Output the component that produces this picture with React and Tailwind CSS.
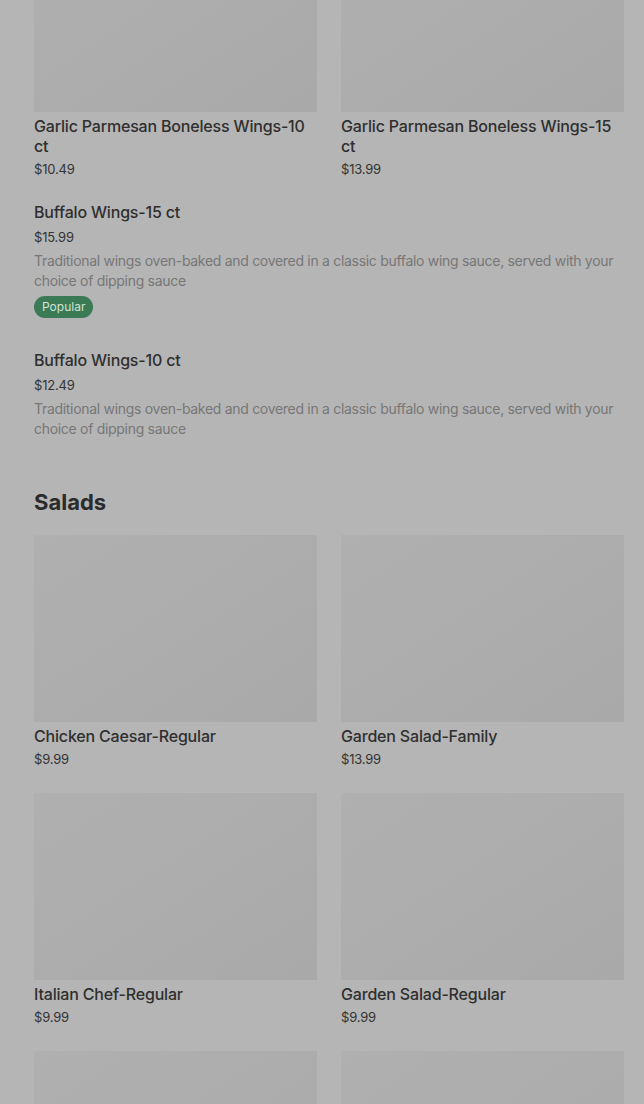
const wingCards = [
  { name: "Garlic Parmesan Boneless Wings-10 ct", price: "$10.49" },
  { name: "Garlic Parmesan Boneless Wings-15 ct", price: "$13.99" },
];

const salads = [
  { name: "Chicken Caesar-Regular", price: "$9.99" },
  { name: "Garden Salad-Family", price: "$13.99" },
  { name: "Italian Chef-Regular", price: "$9.99" },
  { name: "Garden Salad-Regular", price: "$9.99" },
  { name: "", price: "" },
  { name: "", price: "" },
];

const desc =
  "Traditional wings oven-baked and covered in a classic buffalo wing sauce, served with your choice of dipping sauce";

const Card = ({ item }) => (
  <div>
    <div className="h-[187px] bg-gradient-to-br from-[#b0b0b0] to-[#a9a9a9]" />
    {item.name && (
      <>
        <h3 className="mt-1 text-[16px] leading-5 font-medium tracking-[-0.18px] text-[#2f2f2f]">{item.name}</h3>
        <p className="mt-[3px] text-[13px] leading-5 tracking-[-0.2px] text-[#333]">{item.price}</p>
      </>
    )}
  </div>
);

const ListItem = ({ name, price, popular }) => (
  <div className="py-4">
    <h3 className="text-[16px] leading-5 font-medium tracking-[-0.18px] text-[#2f2f2f]">{name}</h3>
    <p className="mt-[5px] text-[13px] leading-5 tracking-[-0.2px] text-[#333]">{price}</p>
    <p className="mt-[4px] text-[14px] leading-5 text-[#777] tracking-[-0.3px]">{desc}</p>
    {popular && (
      <span className="mt-[5px] inline-block rounded-full bg-[#3a7a55] px-2 text-[12px] leading-[22px] text-[#cfe3d6]">
        Popular
      </span>
    )}
  </div>
);

export default function App() {
  return (
    <div
      className="min-h-[1104px] bg-[#b5b5b5] pl-[34px] pr-[20px] overflow-hidden"
      style={{ fontFamily: "Inter, 'Noto Sans', sans-serif" }}
    >
      <div className="-mt-[75px] grid grid-cols-2 gap-x-6">
        {wingCards.map((c) => (
          <Card key={c.name} item={c} />
        ))}
      </div>

      <div className="mt-[7px]">
        <ListItem name="Buffalo Wings-15 ct" price="$15.99" popular />
        <ListItem name="Buffalo Wings-10 ct" price="$12.49" />
      </div>

      <h2 className="mt-[33px] text-[22px] leading-7 font-bold text-[#2b2b2b]">Salads</h2>

      <div className="mt-[19px] grid grid-cols-2 gap-x-6 gap-y-6">
        {salads.map((s, i) => (
          <Card key={i} item={s} />
        ))}
      </div>
    </div>
  );
}
